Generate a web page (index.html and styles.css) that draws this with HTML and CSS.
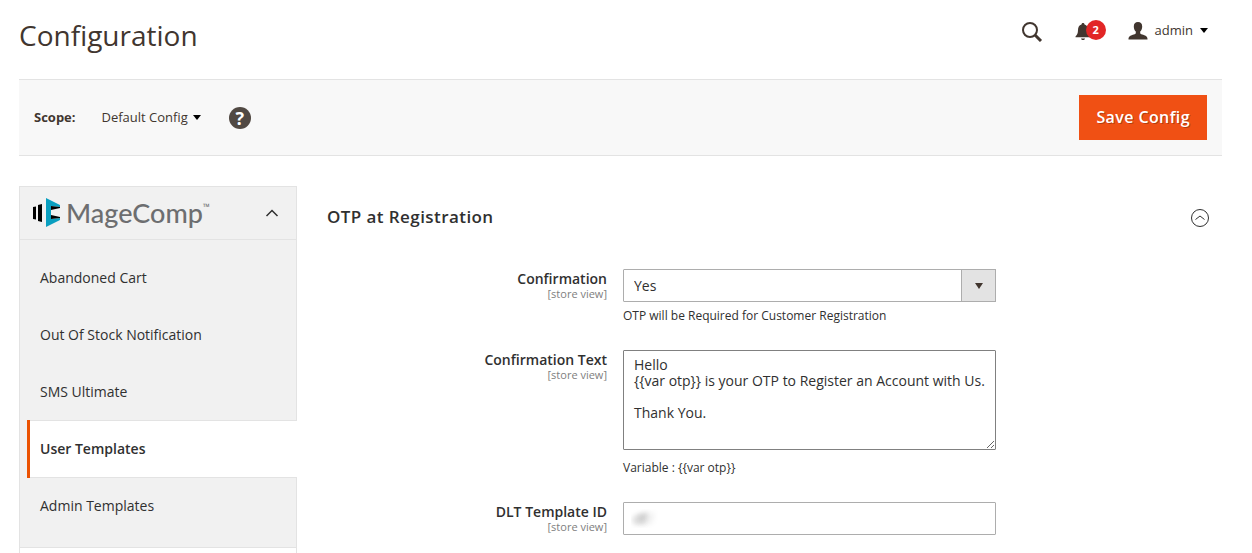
FILE: index.html
```
<!DOCTYPE html>
<html lang="en">
<head>
    <meta charset="UTF-8">
    <meta name="viewport" content="width=device-width, initial-scale=1.0">
    <title>Configuration / Magento Admin</title>
    <link rel="stylesheet" href="styles.css">
</head>
<body>
    <header class="page-header">
        <h1 class="page-title">Configuration</h1>
        <div class="header-tools">
            <button type="button" class="tool-btn search-btn" aria-label="Search">
                <svg width="22" height="22" viewBox="0 0 22 22">
                    <circle cx="9" cy="10" r="7" fill="none" stroke="#41362f" stroke-width="2"/>
                    <path d="M14 15l6 6" stroke="#41362f" stroke-width="3"/>
                </svg>
            </button>
            <button type="button" class="tool-btn bell-btn" aria-label="Notifications">
                <svg width="16" height="18" viewBox="0 0 16 18" fill="#41362f">
                    <path d="M8 1c1 0 1.500.6 1.500 1.500C12 3.200 13 5.500 13 8c0 3.500 1 5 2.500 6.500v.8H.5v-.8C2 13 3 11.500 3 8c0-2.500 1-4.800 3.500-5.500C6.500 1.600 7 1 8 1z"/>
                    <path d="M6 16.500h4c-.3 1-1 1.500-2 1.500s-1.700-.5-2-1.500z"/>
                </svg>
                <span class="bell-count">2</span>
            </button>
            <button type="button" class="tool-btn user-btn">
                <svg width="20" height="18" viewBox="0 0 20 18" fill="#41362f">
                    <path d="M10 0c2.800 0 4.200 1.800 4.200 4.400 0 2.200-.8 4-2 5.200v1.200c0 1 .8 1.400 2 1.800 2.800.8 5.300 1.600 5.300 4.400v.5H.5V17c0-2.800 2.500-3.600 5.300-4.400 1.200-.4 2-.8 2-1.800V9.600c-1.200-1.200-2-3-2-5.200C5.800 1.800 7.200 0 10 0z"/>
                </svg>
                <span>admin</span>
                <span class="caret"></span>
            </button>
        </div>
    </header>

    <div class="action-bar">
        <span class="scope-label" id="scope-label">Scope:</span>
        <button type="button" class="scope-switch" aria-describedby="scope-label">
            <span>Default Config</span>
            <span class="caret"></span>
        </button>
        <a href="#" class="help-link" aria-label="Help">?</a>
        <button type="submit" form="config-form" class="save-btn">Save Config</button>
    </div>

    <main class="columns">
        <nav class="sidebar">
            <button type="button" class="sidebar-title" aria-label="MageComp">
                <svg width="28" height="30" viewBox="0 0 28 30">
                    <path d="M0 9l3-.5v13L0 21zM5 7l4-1v18l-4-1z" fill="#000"/>
                    <path d="M13 0l14 7v2l-9-1v13l9-1v2l-14 7z" fill="#0a9fc0"/>
                    <path d="M18 8l9 1v1l-9 2zM18 17l9 2v1l-9 1z" fill="#000"/>
                </svg>
                <span class="brand">MageComp</span><span class="brand-tm">™</span>
                <svg class="chevron" width="14" height="8" viewBox="0 0 14 8">
                    <path d="M1.500 7l5.500-5.500L12.500 7" fill="none" stroke="#303030" stroke-width="1.500"/>
                </svg>
            </button>
            <ul class="sidebar-items">
                <li><a href="#">Abandoned Cart</a></li>
                <li><a href="#">Out Of Stock Notification</a></li>
                <li><a href="#">SMS Ultimate</a></li>
                <li class="active"><a href="#">User Templates</a></li>
                <li><a href="#">Admin Templates</a></li>
            </ul>
        </nav>

        <form class="config" id="config-form">
            <div class="section-head">
                <h2>OTP at Registration</h2>
                <button type="button" class="tool-btn" aria-label="Collapse section">
                    <svg width="20" height="20" viewBox="0 0 20 20" fill="none" stroke="#303030">
                        <circle cx="10" cy="11" r="8.500"/>
                        <path d="M5.500 12.500L10 9l4.500 3.500"/>
                    </svg>
                </button>
            </div>

            <div class="field">
                <label for="confirmation">Confirmation <span class="hint">[store view]</span></label>
                <div class="value">
                    <div class="select-wrap">
                        <select id="confirmation">
                            <option selected>Yes</option>
                            <option>No</option>
                        </select>
                    </div>
                    <p class="note">OTP will be Required for Customer Registration</p>
                </div>
            </div>

            <div class="field">
                <label for="confirmation-text">Confirmation Text <span class="hint">[store view]</span></label>
                <div class="value">
                    <textarea id="confirmation-text">Hello
{{var otp}} is your OTP to Register an Account with Us.

Thank You.</textarea>
                    <p class="note">Variable : {{var otp}}</p>
                </div>
            </div>

            <div class="field">
                <label for="dlt-id">DLT Template ID <span class="hint">[store view]</span></label>
                <div class="value">
                    <input type="text" id="dlt-id" class="masked" value="df">
                </div>
            </div>
        </form>
    </main>
</body>
</html>
```
FILE: styles.css
```
*, *::before, *::after {
    margin: 0;
    padding: 0;
    box-sizing: border-box;
}

body {
    padding: 0 30px 0 19px;
    font-family: 'Open Sans', 'Noto Sans', sans-serif;
    font-size: 14px;
    line-height: 19px;
    color: #303030;
    background: #fff;
}

button, select, textarea, input {
    font: inherit;
    color: inherit;
}

button {
    border: 0;
    background: none;
    cursor: pointer;
}

a {
    color: inherit;
    text-decoration: none;
}

svg {
    display: block;
    flex: none;
}

.caret {
    border: 4px solid transparent;
    border-top: 5px solid #000;
    border-bottom: 0;
}

/* Header */
.page-header {
    display: flex;
    justify-content: space-between;
    padding: 15px 14px 24px 0;
}

.page-title {
    font-size: 28px;
    line-height: 40px;
    font-weight: 400;
    color: #41362f;
}

.header-tools {
    display: flex;
    align-items: center;
    gap: 22px;
    height: 31px;
}

.tool-btn {
    display: flex;
    align-items: center;
}

.bell-btn {
    position: relative;
    width: 31px;
    margin-left: 10px;
}

.bell-count {
    position: absolute;
    top: -2px;
    right: 0;
    width: 20px;
    height: 20px;
    border-radius: 50%;
    background: #e22626;
    color: #fff;
    font-size: 11px;
    line-height: 20px;
    font-weight: 700;
}

.user-btn {
    gap: 7px;
    font-size: 13px;
    color: #41362f;
}

/* Scope and save */
.action-bar {
    display: flex;
    align-items: center;
    padding: 15px;
    border-top: 1px solid #e3e3e3;
    border-bottom: 1px solid #e3e3e3;
    background: #f8f8f8;
    font-size: 13px;
    color: #41362f;
}

.scope-label {
    font-weight: 700;
}

.scope-switch {
    display: flex;
    align-items: center;
    gap: 5px;
    margin: 0 28px 0 26px;
}

.help-link {
    width: 22px;
    height: 22px;
    border-radius: 50%;
    background: #514943;
    color: #fff;
    font-size: 18px;
    line-height: 22px;
    font-weight: 700;
    text-align: center;
}

.save-btn {
    height: 45px;
    margin-left: auto;
    padding: 0 17px;
    background: #f05014;
    color: #fff;
    font-size: 16px;
    font-weight: 600;
    letter-spacing: .025em;
    text-shadow: 1px 1px 0 rgba(0, 0, 0, .25);
}

/* Columns */
.columns {
    display: flex;
    gap: 30px;
    padding-top: 30px;
}

.sidebar {
    flex: none;
    width: 278px;
    padding-bottom: 5px;
    border: 1px solid #e3e3e3;
    border-bottom: 0;
}

.sidebar-title {
    display: flex;
    align-items: center;
    width: 100%;
    height: 53px;
    padding: 0 17px 0 13px;
    border-bottom: 1px solid #e3e3e3;
    background: #f1f1f1;
}

.brand {
    margin-left: 5px;
    font-family: Lato, sans-serif;
    font-size: 27px;
    line-height: 30px;
    font-weight: 500;
    color: #6d6e70;
}

.brand-tm {
    align-self: flex-start;
    margin-top: 10px;
    font-size: 9px;
    color: #6d6e70;
}

.chevron {
    margin-left: auto;
}

.sidebar-items {
    padding: 9px 0 13px;
    border-bottom: 1px solid #e3e3e3;
    background: #f1f1f1;
    list-style: none;
}

.sidebar-items a {
    display: block;
    padding: 19px 20px;
}

.sidebar-items .active {
    margin: 0 -1px -1px 7px;
    border-top: 1px solid #e3e3e3;
    border-bottom: 1px solid #e3e3e3;
    background: #fff;
    font-weight: 600;
}

.active a {
    margin: -1px 0;
    padding: 19px 10px 20px;
    border-left: 3px solid #eb5202;
}

/* Settings form */
.config {
    flex: 1;
}

.section-head {
    display: flex;
    align-items: center;
    justify-content: space-between;
    padding: 20px 12px 0 0;
    margin-bottom: 41px;
}

.section-head h2 {
    font-size: 17px;
    line-height: 22px;
    font-weight: 600;
    letter-spacing: .025em;
}

.field {
    display: grid;
    grid-template-columns: 296fr 373fr 226fr;
}

.field + .field {
    margin-top: 25px;
}

.field label {
    padding-right: 16px;
    font-weight: 600;
    text-align: right;
}

.hint {
    display: block;
    color: #808080;
    font-size: 11px;
    line-height: 12px;
    font-weight: 400;
}

.value select, .value input, .value textarea {
    display: block;
    width: 100%;
    height: 33px;
    padding: 0 10px;
    border: 1px solid #adadad;
    border-radius: 1px;
    background: #fff;
}

.value select {
    appearance: none;
}

.select-wrap {
    position: relative;
}

.select-wrap::before {
    content: '';
    position: absolute;
    top: 0;
    right: 0;
    width: 35px;
    height: 33px;
    border: 1px solid #adadad;
    background: #e3e3e3;
    pointer-events: none;
}

.select-wrap::after {
    content: '';
    position: absolute;
    top: 14px;
    right: 13px;
    border: 4px solid transparent;
    border-top: 6px solid #41362f;
    border-bottom: 0;
    pointer-events: none;
}

.value textarea {
    height: 100px;
    margin-bottom: 9px;
    padding: 6px 10px;
    border-color: #808080;
    line-height: 16px;
    resize: vertical;
}

.value .masked {
    padding: 0 7px;
    color: transparent;
    text-shadow: 2px 0 5px rgba(0, 0, 0, .4), 9px 0 6px rgba(0, 0, 0, .2);
}

.note {
    margin-top: 5px;
    font-size: 12px;
    line-height: 18px;
}
```
